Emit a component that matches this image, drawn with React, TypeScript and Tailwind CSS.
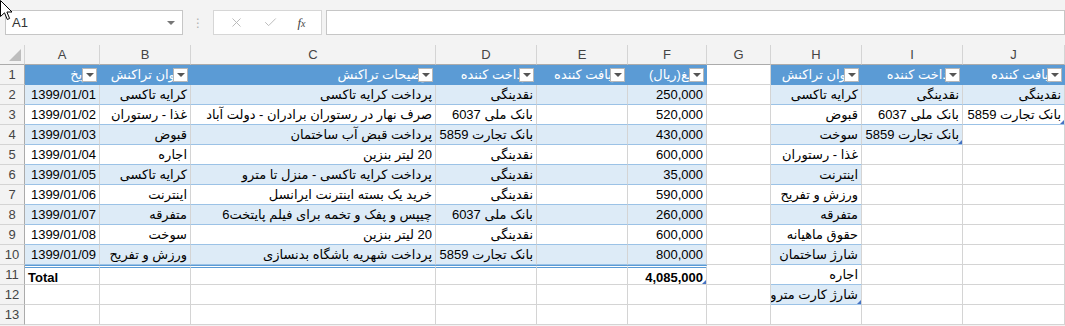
import { X, Check } from 'lucide-react'

const letters = ['A', 'B', 'C', 'D', 'E', 'F', 'G', 'H', 'I', 'J']

const headers: Record<number, string> = {
  0: 'تاریخ',
  1: 'عنوان تراکنش',
  2: 'توضیحات تراکنش',
  3: 'پرداخت کننده',
  4: 'دریافت کننده',
  5: 'مبلغ(ریال)',
  7: 'عنوان تراکنش',
  8: 'پرداخت کننده',
  9: 'دریافت کننده',
}

// rows 2..13
const body: string[][] = [
  ['1399/01/01', 'کرایه تاکسی', 'پرداخت کرایه تاکسی', 'نقدینگی', '', '250,000', '', 'کرایه تاکسی', 'نقدینگی', 'نقدینگی'],
  ['1399/01/02', 'غذا - رستوران', 'صرف نهار در رستوران برادران - دولت آباد', 'بانک ملی 6037', '', '520,000', '', 'قبوض', 'بانک ملی 6037', 'بانک تجارت 5859'],
  ['1399/01/03', 'قبوض', 'پرداخت قبض آب ساختمان', 'بانک تجارت 5859', '', '430,000', '', 'سوخت', 'بانک تجارت 5859', ''],
  ['1399/01/04', 'اجاره', '20 لیتر بنزین', 'نقدینگی', '', '600,000', '', 'غذا - رستوران', '', ''],
  ['1399/01/05', 'کرایه تاکسی', 'پرداخت کرایه تاکسی - منزل تا مترو', 'نقدینگی', '', '35,000', '', 'اینترنت', '', ''],
  ['1399/01/06', 'اینترنت', 'خرید یک بسته اینترنت ایرانسل', 'نقدینگی', '', '590,000', '', 'ورزش و تفریح', '', ''],
  ['1399/01/07', 'متفرقه', 'چیپس و پفک و تخمه برای فیلم پایتخت6', 'بانک ملی 6037', '', '260,000', '', 'متفرقه', '', ''],
  ['1399/01/08', 'سوخت', '20 لیتر بنزین', 'نقدینگی', '', '600,000', '', 'حقوق ماهیانه', '', ''],
  ['1399/01/09', 'ورزش و تفریح', 'پرداخت شهریه باشگاه بدنسازی', 'بانک تجارت 5859', '', '800,000', '', 'شارژ ساختمان', '', ''],
  ['Total', '', '', '', '', '4,085,000', '', 'اجاره', '', ''],
  ['', '', '', '', '', '', '', 'شارژ کارت مترو', '', ''],
  ['', '', '', '', '', '', '', '', '', ''],
]

// last body row of each table, by column
function tableEnd(col: number) {
  if (col <= 5) return 11
  if (col === 7) return 12
  if (col === 8) return 4
  if (col === 9) return 3
  return 0
}

// right-most column of each table gets the resize handle
const lastCols = [5, 7, 8, 9]

function Dropdown() {
  return (
    <span className="absolute right-[2px] top-[3px] w-[15px] h-[14px] bg-white border border-[#b7b7b7] flex items-center justify-center">
      <span className="w-0 h-0 border-l-[4px] border-r-[4px] border-t-[4px] border-l-transparent border-r-transparent border-t-[#555]" />
    </span>
  )
}

function Cell({ row, col, text }: { row: number; col: number; text: string }) {
  const end = tableEnd(col)
  const inTable = end > 0 && row <= end
  const isHeader = inTable && row === 1
  const isTotal = col <= 5 && row === 11
  const banded = inTable && !isHeader && !isTotal && row % 2 === 0
  const isLatin = /^[0-9/,A-Za-z]+$/.test(text)
  const leftAlign = text === 'Total'

  let cls = 'relative overflow-hidden whitespace-nowrap px-[3px] text-[13px] leading-[19px] border-r border-b '
  if (isHeader) cls += 'bg-[#5b9bd5] text-white border-r-[#5b9bd5] border-b-[#5b9bd5] '
  else if (banded) cls += 'bg-[#ddebf7] text-black border-r-[#d4d4d4] border-b-[#9bc2e6] '
  else if (inTable && !isTotal) cls += 'bg-white text-black border-r-[#d4d4d4] border-b-[#9bc2e6] '
  else cls += 'bg-white text-black border-r-[#d4d4d4] border-b-[#d4d4d4] '
  if (isTotal) cls += 'border-t-[3px] border-t-[#5b9bd5] border-double leading-[15px] font-bold '
  cls += leftAlign ? 'text-left ' : 'text-right '

  const hasHandle = inTable && row === end && lastCols.includes(col)

  return (
    <div className={cls} dir={isLatin || !text ? 'ltr' : 'rtl'}>
      {text}
      {isHeader && <Dropdown />}
      {hasHandle && (
        <span className="absolute right-0 bottom-0 block w-[4px] h-[4px] bg-[#4472c4] [clip-path:polygon(100%_0,100%_100%,0_100%)]" />
      )}
    </div>
  )
}

export default function App() {
  const rows = [1, ...body.map((_, i) => i + 2)]
  return (
    <div
      className="relative w-[1065px] h-[326px] overflow-hidden bg-[#f3f3f3]"
      style={{ fontFamily: '"Liberation Sans", "DejaVu Sans", sans-serif' }}
    >
      {/* formula bar */}
      <div className="h-[45px] flex items-start pt-[10px]">
        <div className="ml-[5px] w-[178px] h-[25px] bg-white border border-[#c6c6c6] flex items-center justify-between pl-[6px] pr-[7px]">
          <span className="text-[13px] text-[#333]">A1</span>
          <span className="w-0 h-0 border-l-[4px] border-r-[4px] border-t-[4px] border-l-transparent border-r-transparent border-t-[#777]" />
        </div>
        <div className="w-[30px] h-[25px] flex items-center justify-center text-[#b0b0b0] text-[12px]">⋮</div>
        <div className="w-[109px] h-[25px] bg-white border border-[#d6d6d6] flex items-center justify-around px-[6px]">
          <X className="w-[15px] h-[15px] text-[#b8b8b8]" strokeWidth={1.5} />
          <Check className="w-[15px] h-[15px] text-[#b8b8b8]" strokeWidth={1.5} />
          <span className="text-[13px] text-[#444] italic" style={{ fontFamily: '"Liberation Serif", serif' }}>
            f<span className="text-[10px]">x</span>
          </span>
        </div>
        <div className="ml-[4px] flex-1 h-[25px] bg-white border border-[#c6c6c6]" />
      </div>

      {/* sheet */}
      <div className="grid grid-cols-[25px_75px_91px_245px_101px_91px_79px_64px_91px_101px_1fr] auto-rows-[20px] bg-white">
        <div className="relative bg-[#f3f3f3] border-r border-b border-r-[#d4d4d4] border-b-[#ababab]">
          <span className="absolute right-[3px] bottom-[3px] w-[12px] h-[12px] bg-[#bdbdbd] [clip-path:polygon(100%_0,100%_100%,0_100%)]" />
        </div>
        {letters.map((l) => (
          <div
            key={l}
            className="bg-[#f3f3f3] border-r border-b border-r-[#d4d4d4] border-b-[#ababab] text-center text-[13px] leading-[19px] text-[#444]"
          >
            {l}
          </div>
        ))}
        {rows.map((r) => (
          <div key={r} className="contents">
            <div className="bg-[#f3f3f3] border-r border-b border-r-[#ababab] border-b-[#d4d4d4] text-center text-[13px] leading-[19px] text-[#444]">
              {r}
            </div>
            {letters.map((_, c) => (
              <Cell key={c} row={r} col={c} text={r === 1 ? headers[c] ?? '' : body[r - 2][c]} />
            ))}
          </div>
        ))}
      </div>

      {/* mouse pointer */}
      <svg className="absolute left-0 top-0" width="14" height="22" viewBox="0 0 14 22">
        <path d="M0.5 0.5 L0.5 16.5 L4.5 12.8 L7.3 19.5 L9.6 18.5 L6.9 12 L12 12 Z" fill="#fff" stroke="#000" strokeWidth="1" />
      </svg>
    </div>
  )
}
